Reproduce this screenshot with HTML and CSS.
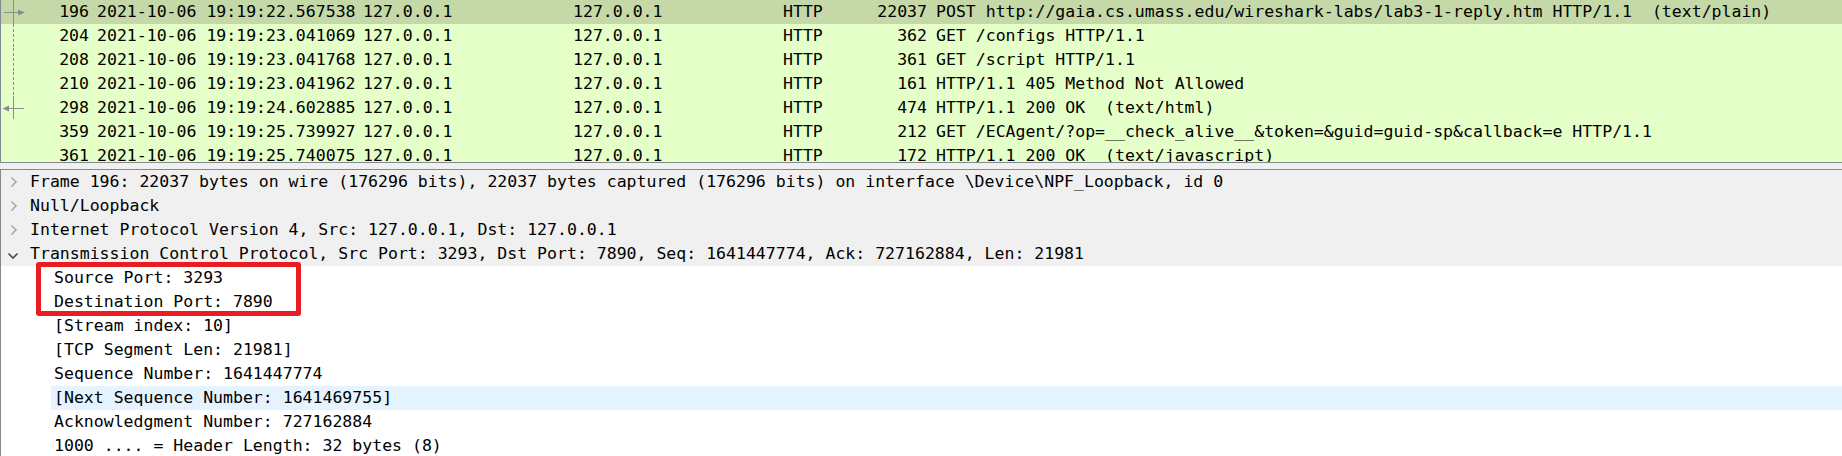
FILE: index.html
```html
<!DOCTYPE html>
<html>
<head>
<meta charset="utf-8">
<link rel="stylesheet" href="styles.css">
</head>
<body>
<div class="plist">
  <div class="prow sel">
    <div class="c no"><svg class="rel" width="26" height="24" viewBox="0 0 26 24"><line x1="12.5" y1="0" x2="12.5" y2="24" stroke="#8c8c8c"/><line x1="3" y1="12.5" x2="18" y2="12.5" stroke="#8c8c8c"/><polygon points="17,9.5 24,12.5 17,15.5" fill="#8c8c8c"/></svg><span>196</span></div>
    <div class="c">2021-10-06 19:19:22.567538</div><div class="c">127.0.0.1</div><div class="c">127.0.0.1</div><div class="c">HTTP</div><div class="c len">22037</div><div class="c info">POST http://gaia.cs.umass.edu/wireshark-labs/lab3-1-reply.htm HTTP/1.1  (text/plain)</div>
  </div>
  <div class="prow">
    <div class="c no"><svg class="rel" width="26" height="24" viewBox="0 0 26 24"><line x1="12.5" y1="0" x2="12.5" y2="24" stroke="#8c8c8c" stroke-dasharray="3 2"/></svg><span>204</span></div>
    <div class="c">2021-10-06 19:19:23.041069</div><div class="c">127.0.0.1</div><div class="c">127.0.0.1</div><div class="c">HTTP</div><div class="c len">362</div><div class="c info">GET /configs HTTP/1.1</div>
  </div>
  <div class="prow">
    <div class="c no"><svg class="rel" width="26" height="24" viewBox="0 0 26 24"><line x1="12.5" y1="0" x2="12.5" y2="24" stroke="#8c8c8c" stroke-dasharray="3 2"/></svg><span>208</span></div>
    <div class="c">2021-10-06 19:19:23.041768</div><div class="c">127.0.0.1</div><div class="c">127.0.0.1</div><div class="c">HTTP</div><div class="c len">361</div><div class="c info">GET /script HTTP/1.1</div>
  </div>
  <div class="prow">
    <div class="c no"><svg class="rel" width="26" height="24" viewBox="0 0 26 24"><line x1="12.5" y1="0" x2="12.5" y2="24" stroke="#8c8c8c" stroke-dasharray="3 2"/></svg><span>210</span></div>
    <div class="c">2021-10-06 19:19:23.041962</div><div class="c">127.0.0.1</div><div class="c">127.0.0.1</div><div class="c">HTTP</div><div class="c len">161</div><div class="c info">HTTP/1.1 405 Method Not Allowed</div>
  </div>
  <div class="prow">
    <div class="c no"><svg class="rel" width="26" height="24" viewBox="0 0 26 24"><line x1="12.5" y1="0" x2="12.5" y2="23" stroke="#8c8c8c"/><line x1="7" y1="12.5" x2="23" y2="12.5" stroke="#8c8c8c"/><polygon points="8,9.5 1.5,12.5 8,15.5" fill="#8c8c8c"/></svg><span>298</span></div>
    <div class="c">2021-10-06 19:19:24.602885</div><div class="c">127.0.0.1</div><div class="c">127.0.0.1</div><div class="c">HTTP</div><div class="c len">474</div><div class="c info">HTTP/1.1 200 OK  (text/html)</div>
  </div>
  <div class="prow">
    <div class="c no"><span>359</span></div>
    <div class="c">2021-10-06 19:19:25.739927</div><div class="c">127.0.0.1</div><div class="c">127.0.0.1</div><div class="c">HTTP</div><div class="c len">212</div><div class="c info">GET /ECAgent/?op=__check_alive__&amp;token=&amp;guid=guid-sp&amp;callback=e HTTP/1.1</div>
  </div>
  <div class="prow">
    <div class="c no"><span>361</span></div>
    <div class="c">2021-10-06 19:19:25.740075</div><div class="c">127.0.0.1</div><div class="c">127.0.0.1</div><div class="c">HTTP</div><div class="c len">172</div><div class="c info">HTTP/1.1 200 OK  (text/javascript)</div>
  </div>
</div>
<div class="split"></div>
<div class="tree">
  <div class="trow top"><span class="branch"><svg class="chev" width="8" height="12" viewBox="0 0 8 12"><polyline points="1.5,1.5 6,6 1.5,10.5" fill="none" stroke="#a8a8a8" stroke-width="1.6"/></svg></span><span class="t">Frame 196: 22037 bytes on wire (176296 bits), 22037 bytes captured (176296 bits) on interface \Device\NPF_Loopback, id 0</span></div>
  <div class="trow top"><span class="branch"><svg class="chev" width="8" height="12" viewBox="0 0 8 12"><polyline points="1.5,1.5 6,6 1.5,10.5" fill="none" stroke="#a8a8a8" stroke-width="1.6"/></svg></span><span class="t">Null/Loopback</span></div>
  <div class="trow top"><span class="branch"><svg class="chev" width="8" height="12" viewBox="0 0 8 12"><polyline points="1.5,1.5 6,6 1.5,10.5" fill="none" stroke="#a8a8a8" stroke-width="1.6"/></svg></span><span class="t">Internet Protocol Version 4, Src: 127.0.0.1, Dst: 127.0.0.1</span></div>
  <div class="trow top"><span class="branch"><svg class="chev open" width="12" height="8" viewBox="0 0 12 8"><polyline points="1.5,1.5 6,6 10.5,1.5" fill="none" stroke="#4a4a4a" stroke-width="1.6"/></svg></span><span class="t">Transmission Control Protocol, Src Port: 3293, Dst Port: 7890, Seq: 1641447774, Ack: 727162884, Len: 21981</span></div>
  <div class="trow child">Source Port: 3293</div>
  <div class="trow child">Destination Port: 7890</div>
  <div class="trow child">[Stream index: 10]</div>
  <div class="trow child">[TCP Segment Len: 21981]</div>
  <div class="trow child">Sequence Number: 1641447774</div>
  <div class="trow child hover">[Next Sequence Number: 1641469755]</div>
  <div class="trow child">Acknowledgment Number: 727162884</div>
  <div class="trow child">1000 .... = Header Length: 32 bytes (8)</div>
</div>
<div class="mark"></div>
</body>
</html>
```
FILE: styles.css
```css
html, body {
  margin: 0;
  padding: 0;
}
body {
  width: 1842px;
  height: 456px;
  overflow: hidden;
  position: relative;
  background: #f0f0f0;
  font-family: "DejaVu Sans Mono", "Liberation Mono", monospace;
  font-size: 16.52px;
  color: #000;
}
.plist {
  height: 162px;
  overflow: hidden;
  border-left: 1px solid #828790;
  border-bottom: 1px solid #828790;
  background: #e4ffc7;
}
.prow {
  display: grid;
  grid-template-columns: 92px 266px 210px 210px 91px 61px 1fr;
  height: 24px;
  line-height: 24px;
  background: #e4ffc7;
  white-space: pre;
}
.prow.sel {
  background: #c4d8a8;
}
.c {
  padding: 0 4px;
  overflow: hidden;
}
.c.no {
  display: flex;
  align-items: center;
  padding-left: 0;
}
.c.no span {
  margin-left: auto;
}
.rel {
  display: block;
  flex: none;
}
.c.len {
  text-align: right;
}
.c.info {
  padding-left: 5px;
}
.split {
  height: 6px;
}
.tree {
  height: 286px;
  overflow: hidden;
  border-top: 1px solid #828790;
  border-left: 1px solid #828790;
  background: #fff;
}
.trow {
  height: 24px;
  line-height: 24px;
  display: flex;
  align-items: center;
  white-space: pre;
}
.trow.top {
  background: #f0f0f0;
}
.branch {
  width: 29px;
  height: 24px;
  flex: none;
  display: flex;
  align-items: center;
}
.chev {
  display: block;
  margin-left: 9px;
}
.chev.open {
  margin-left: 6px;
  margin-top: 3px;
}
.trow.child {
  margin-left: 50px;
  padding-left: 3px;
}
.trow.hover {
  background: #e5f3ff;
}
.mark {
  position: absolute;
  left: 36px;
  top: 262px;
  width: 265px;
  height: 54px;
  box-sizing: border-box;
  border: 5px solid #e91c24;
  border-radius: 3px;
}
```
